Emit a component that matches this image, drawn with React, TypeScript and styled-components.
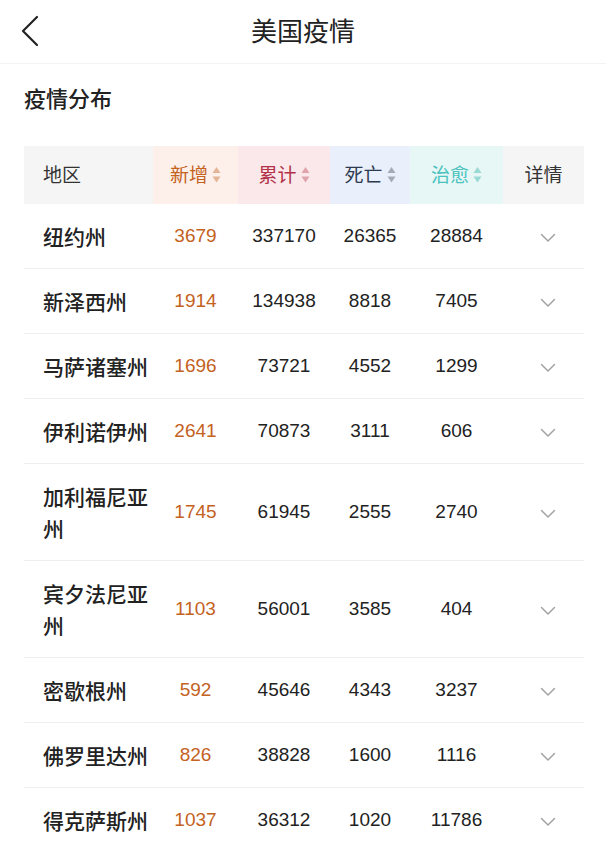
import React from "react";
import styled, { createGlobalStyle } from "styled-components";

const Global = createGlobalStyle`
  html, body { margin: 0; padding: 0; background: #fff; }
  body { font-family: "Liberation Sans", "Noto Sans CJK SC", sans-serif; color: #222; }
`;

const Page = styled.div`
  width: 606px;
  background: #fff;
`;

const NavBar = styled.header`
  height: 63px;
  border-bottom: 1px solid #f3f3f3;
  display: flex;
  align-items: center;
  justify-content: center;
  position: relative;
`;

const BackButton = styled.div`
  position: absolute;
  left: 20px;
  top: 15px;
  width: 20px;
  height: 32px;
`;

const NavTitle = styled.h1`
  margin: 0 0 4px;
  font-family: "Noto Sans CJK SC", sans-serif;
  font-size: 26px;
  font-weight: 400;
  color: #222;
  line-height: 34px;
`;

const SectionTitle = styled.h2`
  margin: 0;
  padding: 18px 24px 34px;
  font-family: "Noto Sans CJK SC", sans-serif;
  font-size: 22px;
  font-weight: 500;
  line-height: 30px;
  color: #222;
`;

const Table = styled.div`
  margin: 0 22px 0 24px;
  display: grid;
  grid-template-columns: 129px 85px 92px 80px 93px 81px;
`;

const HeadCell = styled.div<{ $bg: string; $color: string; $left?: boolean }>`
  height: 58px;
  box-sizing: border-box;
  padding-bottom: 3px;
  background: ${(p) => p.$bg};
  color: ${(p) => p.$color};
  display: flex;
  align-items: center;
  justify-content: ${(p) => (p.$left ? "flex-start" : "center")};
  padding-left: ${(p) => (p.$left ? "19px" : "0")};
  font-family: "Noto Sans CJK SC", sans-serif;
  font-size: 19px;
  gap: 4px;
`;

const SortIcon = styled.svg`
  width: 9px;
  height: 18px;
  display: block;
  margin-top: 2px;
`;

const Cell = styled.div<{ $color?: string }>`
  border-bottom: 1px solid #efefef;
  padding: 16px 0;
  display: flex;
  align-items: center;
  justify-content: center;
  font-size: 19px;
  color: ${(p) => p.$color || "#222"};
  line-height: 32px;
`;

const NameCell = styled(Cell)`
  justify-content: flex-start;
  padding-left: 19px;
  font-family: "Noto Sans CJK SC", sans-serif;
  font-size: 21px;
  font-weight: 500;
  color: #222;
`;

const ChevronCell = styled(Cell)`
  padding-left: 9px;
`;

const Chevron = styled.svg`
  width: 16px;
  height: 10px;
  display: block;
  margin-top: 4px;
`;

type Col = { label: string; bg: string; color: string; arrow?: string; left?: boolean };

const cols: Col[] = [
  { label: "地区", bg: "#f5f5f5", color: "#333", left: true },
  { label: "新增", bg: "#fdf0ea", color: "#c4621e", arrow: "#e4b497" },
  { label: "累计", bg: "#fae8ea", color: "#b2324a", arrow: "#dea3ab" },
  { label: "死亡", bg: "#e9f0fb", color: "#2d3a4f", arrow: "#a4abb5" },
  { label: "治愈", bg: "#e7f7f6", color: "#4ac2be", arrow: "#9ad9d4" },
  { label: "详情", bg: "#f5f5f5", color: "#333" },
];

const rows: [string, number, number, number, number][] = [
  ["纽约州", 3679, 337170, 26365, 28884],
  ["新泽西州", 1914, 134938, 8818, 7405],
  ["马萨诸塞州", 1696, 73721, 4552, 1299],
  ["伊利诺伊州", 2641, 70873, 3111, 606],
  ["加利福尼亚州", 1745, 61945, 2555, 2740],
  ["宾夕法尼亚州", 1103, 56001, 3585, 404],
  ["密歇根州", 592, 45646, 4343, 3237],
  ["佛罗里达州", 826, 38828, 1600, 1116],
  ["得克萨斯州", 1037, 36312, 1020, 11786],
];

export default function App() {
  return (
    <Page>
      <Global />
      <NavBar>
        <BackButton>
          <svg width="20" height="32" viewBox="0 0 20 32">
            <path d="M17 2 L3 16 L17 30" fill="none" stroke="#222" strokeWidth="2.2" strokeLinecap="round" strokeLinejoin="round" />
          </svg>
        </BackButton>
        <NavTitle>美国疫情</NavTitle>
      </NavBar>
      <SectionTitle>疫情分布</SectionTitle>
      <Table>
        {cols.map((c) => (
          <HeadCell key={c.label} $bg={c.bg} $color={c.color} $left={c.left}>
            {c.label}
            {c.arrow && (
              <SortIcon viewBox="0 0 9 18">
                <path d="M4.5 1 L8.5 7 L0.5 7 Z" fill={c.arrow} />
                <path d="M0.5 10.5 L8.5 10.5 L4.5 16.5 Z" fill={c.arrow} />
              </SortIcon>
            )}
          </HeadCell>
        ))}
        {rows.map((r) => (
          <React.Fragment key={r[0]}>
            <NameCell>{r[0]}</NameCell>
            <Cell $color="#c4621e">{r[1]}</Cell>
            <Cell>{r[2]}</Cell>
            <Cell>{r[3]}</Cell>
            <Cell>{r[4]}</Cell>
            <ChevronCell>
              <Chevron viewBox="0 0 16 10">
                <path d="M1.5 1.5 L8 8 L14.5 1.5" fill="none" stroke="#a3a3a3" strokeWidth="1.5" strokeLinecap="round" strokeLinejoin="round" />
              </Chevron>
            </ChevronCell>
          </React.Fragment>
        ))}
      </Table>
    </Page>
  );
}
